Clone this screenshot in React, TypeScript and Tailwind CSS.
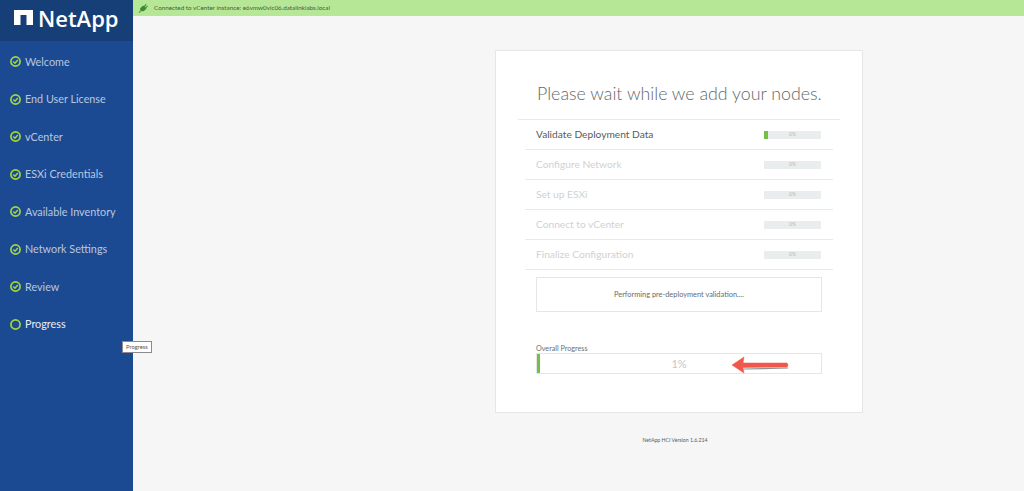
const font = { fontFamily: '"Lato", "Noto Sans", sans-serif' };

const navItems = [
  'Welcome',
  'End User License',
  'vCenter',
  'ESXi Credentials',
  'Available Inventory',
  'Network Settings',
  'Review',
];

const steps = [
  { name: 'Validate Deployment Data', active: true },
  { name: 'Configure Network', active: false },
  { name: 'Set up ESXi', active: false },
  { name: 'Connect to vCenter', active: false },
  { name: 'Finalize Configuration', active: false },
];

function CheckIcon() {
  return (
    <svg width="11" height="11" viewBox="0 0 11 11" fill="none" className="shrink-0">
      <circle cx="5.5" cy="5.5" r="4.6" stroke="#a4d63c" strokeWidth="1.7" />
      <path d="M3.3 5.5 L5 7.2 L7.8 4.1" stroke="#a4d63c" strokeWidth="1.5" />
    </svg>
  );
}

function RingIcon() {
  return (
    <svg width="11" height="11" viewBox="0 0 11 11" fill="none" className="shrink-0">
      <circle cx="5.5" cy="5.5" r="4.6" stroke="#a4d63c" strokeWidth="1.7" />
    </svg>
  );
}

function PlugIcon() {
  return (
    <svg width="10" height="10" viewBox="0 0 10 10" className="shrink-0">
      <path d="M0.5 9.5 L2.5 7.5 L2 5.5 L5 2.5 L6 3.2 L7.8 0.8 L8.6 1.5 L6.9 3.9 L7.4 4.4 L9.3 2.6 L9.8 3.4 L8 5.3 L8.5 5.8 L5.5 8.2 L3.4 8 L1.2 10 Z" fill="#3f8a2c" />
    </svg>
  );
}

function Sidebar() {
  return (
    <div className="relative w-[133px] shrink-0 bg-[#1c4a92]">
      <div className="flex h-[41px] items-start gap-[5px] bg-[#173f77] pt-[10px] pl-[14px]">
        <svg width="19" height="15" viewBox="0 0 19 15" className="shrink-0">
          <path d="M0 0H19V15H12.5V5H6.5V15H0Z" fill="#ffffff" />
        </svg>
        <span
          className="-mt-[4px] text-[22px] leading-[24px] font-semibold text-white"
          style={{ fontFamily: '"Open Sans", sans-serif' }}
        >
          NetApp
        </span>
      </div>
      <div className="pt-[2px]">
        {navItems.map((item) => (
          <div key={item} className="flex h-[37.5px] items-center gap-[4px] pl-[10px] text-[10.8px] text-[#b9c7de]">
            <CheckIcon />
            <span>{item}</span>
          </div>
        ))}
        <div className="flex h-[37.5px] items-center gap-[4px] pl-[10px] text-[10.8px] text-[#e8eef7]">
          <RingIcon />
          <span>Progress</span>
        </div>
      </div>
      <div className="absolute top-[341px] left-[122px] z-10 border border-[#8a8a8a] bg-white px-[3px] text-[5.8px] leading-[10px] text-[#555555]">
        Progress
      </div>
    </div>
  );
}

function StepRow({ name, active }: { name: string; active: boolean }) {
  return (
    <div className="mx-[7px] flex h-[30px] items-center justify-between border-b border-[#e9e9e9] pr-[12px] pl-[11px]">
      <span className={`text-[10.2px] ${active ? 'text-[#555c5c]' : 'text-[#cfd2d2]'}`}>{name}</span>
      <div className="relative flex h-[8px] w-[57px] items-center justify-center bg-[#e9eded] text-[5px] text-[#b5b9b9]">
        {active && <div className="absolute top-0 left-0 h-full w-[4px] bg-[#74bf44]" />}
        0%
      </div>
    </div>
  );
}

export default function App() {
  return (
    <div className="flex h-[491px] w-[1024px] overflow-hidden bg-[#f6f6f6]" style={font}>
      <Sidebar />

      <div className="flex-1">
        <div className="flex h-[16px] items-center gap-[6px] bg-[#b5e796] pl-[5px] text-[6.3px] text-[#4a5a44]">
          <PlugIcon />
          <span>Connected to vCenter instance: e6vmw0vic06.datalinklabs.local</span>
        </div>

        <div className="mt-[34px] ml-[362px] h-[363px] w-[368px] border border-[#e6e6e6] bg-white">
          <h1 className="mt-[28px] pl-[41px] text-[17.8px] leading-[28px] font-light whitespace-nowrap text-[#62696a]">
            Please wait while we add your nodes.
          </h1>

          <div className="mx-[22px] mt-[12px] border-t border-[#e9e9e9]">
            {steps.map((s) => (
              <StepRow key={s.name} name={s.name} active={s.active} />
            ))}
          </div>

          <div className="mx-[40px] mt-[7px] flex h-[35px] items-center justify-center border border-[#e6e6e6] text-[7.4px] text-[#666c6c]">
            Performing pre-deployment validation....
          </div>

          <div className="mx-[40px] mt-[32px] text-[7.2px] leading-[9px] text-[#6b7070]">Overall Progress</div>
          <div className="relative mx-[40px] flex h-[21px] items-center justify-center border border-[#e6e6e6] pt-[1px] text-[11px] text-[#c5c8c8]">
            <div className="absolute top-0 left-0 h-full w-[3px] bg-[#74bf44]" />
            1%
            <svg width="60" height="20" viewBox="0 0 60 20" className="absolute top-[1px] left-[194px]">
              <path d="M13 14 L57 13" stroke="#8f8f8f" strokeWidth="1.2" fill="none" />
              <path d="M1 10 L13 2 L12 8 L56 8 Q58 10 56 12 L12 12.5 L13 18 Z" fill="#f1574a" stroke="#f1574a" strokeWidth="0.5" />
            </svg>
          </div>
        </div>

        <div className="mt-[24px] ml-[362px] w-[360px] text-center text-[5.2px] text-[#555c5c]">
          NetApp HCI Version 1.6.214
        </div>
      </div>
    </div>
  );
}
